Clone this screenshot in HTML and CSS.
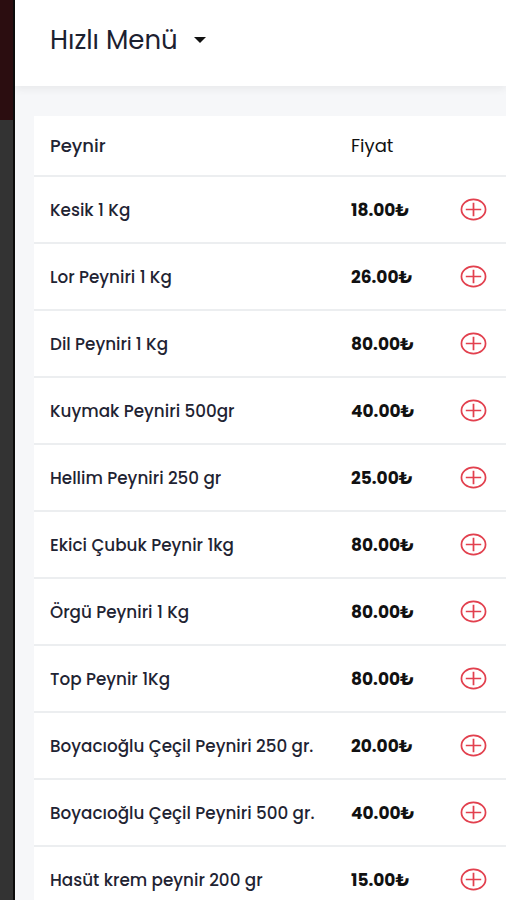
FILE: index.html
```html
<!DOCTYPE html>
<html lang="tr">
<head>
  <meta charset="UTF-8">
  <meta name="viewport" content="width=device-width, initial-scale=1.0">
  <title>Hızlı Menü</title>
  <link rel="stylesheet" href="styles.css">
</head>
<body>
  <div class="sidebar">
    <div class="sidebar-top"></div>
  </div>
  <div class="main">
    <div class="topbar">
      <h1>Hızlı Menü <span class="caret"></span></h1>
    </div>
    <div class="content">
      <div class="card">
        <div class="row head">
          <div class="name">Peynir</div>
          <div class="price">Fiyat</div>
          <div class="add"></div>
        </div>
        <div class="row">
          <div class="name">Kesik 1 Kg</div>
          <div class="price">18.00₺</div>
          <div class="add"><svg viewBox="0 0 28 24" preserveAspectRatio="none"><ellipse cx="14" cy="12" rx="12.5" ry="10.5"/><path d="M14 5v14M6 12h16"/></svg></div>
        </div>
        <div class="row">
          <div class="name">Lor Peyniri 1 Kg</div>
          <div class="price">26.00₺</div>
          <div class="add"><svg viewBox="0 0 28 24" preserveAspectRatio="none"><ellipse cx="14" cy="12" rx="12.5" ry="10.5"/><path d="M14 5v14M6 12h16"/></svg></div>
        </div>
        <div class="row">
          <div class="name">Dil Peyniri 1 Kg</div>
          <div class="price">80.00₺</div>
          <div class="add"><svg viewBox="0 0 28 24" preserveAspectRatio="none"><ellipse cx="14" cy="12" rx="12.5" ry="10.5"/><path d="M14 5v14M6 12h16"/></svg></div>
        </div>
        <div class="row">
          <div class="name">Kuymak Peyniri 500gr</div>
          <div class="price">40.00₺</div>
          <div class="add"><svg viewBox="0 0 28 24" preserveAspectRatio="none"><ellipse cx="14" cy="12" rx="12.5" ry="10.5"/><path d="M14 5v14M6 12h16"/></svg></div>
        </div>
        <div class="row">
          <div class="name">Hellim Peyniri 250 gr</div>
          <div class="price">25.00₺</div>
          <div class="add"><svg viewBox="0 0 28 24" preserveAspectRatio="none"><ellipse cx="14" cy="12" rx="12.5" ry="10.5"/><path d="M14 5v14M6 12h16"/></svg></div>
        </div>
        <div class="row">
          <div class="name">Ekici Çubuk Peynir 1kg</div>
          <div class="price">80.00₺</div>
          <div class="add"><svg viewBox="0 0 28 24" preserveAspectRatio="none"><ellipse cx="14" cy="12" rx="12.5" ry="10.5"/><path d="M14 5v14M6 12h16"/></svg></div>
        </div>
        <div class="row">
          <div class="name">Örgü Peyniri 1 Kg</div>
          <div class="price">80.00₺</div>
          <div class="add"><svg viewBox="0 0 28 24" preserveAspectRatio="none"><ellipse cx="14" cy="12" rx="12.5" ry="10.5"/><path d="M14 5v14M6 12h16"/></svg></div>
        </div>
        <div class="row">
          <div class="name">Top Peynir 1Kg</div>
          <div class="price">80.00₺</div>
          <div class="add"><svg viewBox="0 0 28 24" preserveAspectRatio="none"><ellipse cx="14" cy="12" rx="12.5" ry="10.5"/><path d="M14 5v14M6 12h16"/></svg></div>
        </div>
        <div class="row">
          <div class="name">Boyacıoğlu Çeçil Peyniri 250 gr.</div>
          <div class="price">20.00₺</div>
          <div class="add"><svg viewBox="0 0 28 24" preserveAspectRatio="none"><ellipse cx="14" cy="12" rx="12.5" ry="10.5"/><path d="M14 5v14M6 12h16"/></svg></div>
        </div>
        <div class="row">
          <div class="name">Boyacıoğlu Çeçil Peyniri 500 gr.</div>
          <div class="price">40.00₺</div>
          <div class="add"><svg viewBox="0 0 28 24" preserveAspectRatio="none"><ellipse cx="14" cy="12" rx="12.5" ry="10.5"/><path d="M14 5v14M6 12h16"/></svg></div>
        </div>
        <div class="row">
          <div class="name">Hasüt krem peynir 200 gr</div>
          <div class="price">15.00₺</div>
          <div class="add"><svg viewBox="0 0 28 24" preserveAspectRatio="none"><ellipse cx="14" cy="12" rx="12.5" ry="10.5"/><path d="M14 5v14M6 12h16"/></svg></div>
        </div>
      </div>
    </div>
  </div>
</body>
</html>
```

FILE: styles.css
```css
*{margin:0;padding:0;box-sizing:border-box;}
html,body{width:100%;height:100%;overflow:hidden;}
body{display:flex;font-family:Poppins,Inter,"DejaVu Sans",sans-serif;color:#1f2433;}

.sidebar{width:15px;flex:none;background:#333;border-right:2px solid #0c0c0c;}
.sidebar-top{height:120px;background:#2b0d10;}

.main{flex:1;background:#f6f7f9;min-width:0;overflow:hidden;}
.topbar{height:86px;background:#fff;padding-left:35px;display:flex;align-items:center;box-shadow:0 3px 8px rgba(0,0,0,.06);position:relative;}
.topbar h1{font-size:26px;font-weight:400;color:#1c2130;display:flex;align-items:center;gap:16px;margin-top:-6px;}
.caret{width:0;height:0;border-left:6.5px solid transparent;border-right:6.5px solid transparent;border-top:6.5px solid #111;}

.content{padding:30px 0 0 19px;}
.card{background:#fff;width:500px;}
.row{display:grid;grid-template-columns:301px 100px 80px;align-items:center;height:67px;padding-left:16px;border-top:2px solid #eceef0;font-size:16.8px;font-weight:500;}
.row.head{height:59px;border-top:0;font-size:18px;}
.row.head .price{font-weight:400;}
.price{font-weight:700;color:#111;font-size:17px;}
.row.head .price{font-size:18px;}
.add{padding-left:9px;display:flex;}
.add svg{width:27px;height:23px;fill:none;stroke:#e2404e;stroke-width:1.8;}
```
